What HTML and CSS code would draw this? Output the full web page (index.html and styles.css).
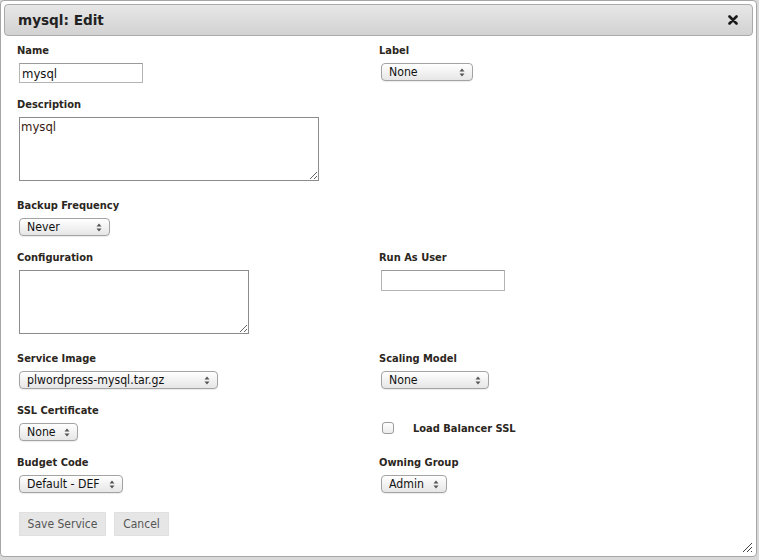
FILE: index.html
```html
<!DOCTYPE html>
<html>
<head>
<meta charset="utf-8">
<link rel="stylesheet" href="styles.css">
</head>
<body>
<div class="dialog">
  <div class="titlebar">
    <span class="title">mysql: Edit</span>
    <span class="close"><svg width="10" height="10" viewBox="0 0 10 10"><path d="M1.5 1.5 L8.5 8.5 M8.5 1.5 L1.5 8.5" stroke="#1a1a1a" stroke-width="2.6" stroke-linecap="round"/></svg></span>
  </div>
  <div class="content">
    <div class="row">
      <div class="field">
        <label class="lbl">Name</label>
        <input class="text" type="text" value="mysql">
      </div>
      <div class="field">
        <label class="lbl">Label</label>
        <span class="sel w-92"><select><option>None</option></select><svg class="arr" width="6" height="9" viewBox="0 0 6 9"><path d="M3 0.5 L5.5 3.5 L0.5 3.5 Z M3 8.5 L5.5 5.5 L0.5 5.5 Z" fill="#555"/></svg></span>
      </div>
    </div>
    <div class="row tall">
      <div class="field">
        <label class="lbl">Description</label>
        <textarea class="area w-300">mysql</textarea>
      </div>
      <div class="field"></div>
    </div>
    <div class="row">
      <div class="field">
        <label class="lbl">Backup Frequency</label>
        <span class="sel w-91"><select><option>Never</option></select><svg class="arr" width="6" height="9" viewBox="0 0 6 9"><path d="M3 0.5 L5.5 3.5 L0.5 3.5 Z M3 8.5 L5.5 5.5 L0.5 5.5 Z" fill="#555"/></svg></span>
      </div>
      <div class="field"></div>
    </div>
    <div class="row tall">
      <div class="field">
        <label class="lbl">Configuration</label>
        <textarea class="area w-230"></textarea>
      </div>
      <div class="field">
        <label class="lbl">Run As User</label>
        <input class="text tall-input" type="text" value="">
      </div>
    </div>
    <div class="row">
      <div class="field">
        <label class="lbl">Service Image</label>
        <span class="sel w-199"><select><option>plwordpress-mysql.tar.gz</option></select><svg class="arr" width="6" height="9" viewBox="0 0 6 9"><path d="M3 0.5 L5.5 3.5 L0.5 3.5 Z M3 8.5 L5.5 5.5 L0.5 5.5 Z" fill="#555"/></svg></span>
      </div>
      <div class="field">
        <label class="lbl">Scaling Model</label>
        <span class="sel w-108"><select><option>None</option></select><svg class="arr" width="6" height="9" viewBox="0 0 6 9"><path d="M3 0.5 L5.5 3.5 L0.5 3.5 Z M3 8.5 L5.5 5.5 L0.5 5.5 Z" fill="#555"/></svg></span>
      </div>
    </div>
    <div class="row">
      <div class="field">
        <label class="lbl">SSL Certificate</label>
        <span class="sel w-59"><select><option>None</option></select><svg class="arr" width="6" height="9" viewBox="0 0 6 9"><path d="M3 0.5 L5.5 3.5 L0.5 3.5 Z M3 8.5 L5.5 5.5 L0.5 5.5 Z" fill="#555"/></svg></span>
      </div>
      <div class="field check-field">
        <span class="checkbox"></span>
        <span class="check-label">Load Balancer SSL</span>
      </div>
    </div>
    <div class="row last">
      <div class="field">
        <label class="lbl">Budget Code</label>
        <span class="sel w-104"><select><option>Default - DEF</option></select><svg class="arr" width="6" height="9" viewBox="0 0 6 9"><path d="M3 0.5 L5.5 3.5 L0.5 3.5 Z M3 8.5 L5.5 5.5 L0.5 5.5 Z" fill="#555"/></svg></span>
      </div>
      <div class="field">
        <label class="lbl">Owning Group</label>
        <span class="sel w-66"><select><option>Admin</option></select><svg class="arr" width="6" height="9" viewBox="0 0 6 9"><path d="M3 0.5 L5.5 3.5 L0.5 3.5 Z M3 8.5 L5.5 5.5 L0.5 5.5 Z" fill="#555"/></svg></span>
      </div>
    </div>
    <div class="buttons">
      <button class="btn w-87">Save Service</button>
      <button class="btn w-55">Cancel</button>
    </div>
  </div>
  <svg class="resize" width="12" height="12" viewBox="0 0 12 12"><path d="M11 2 L2 11 M11 6 L6 11 M11 10 L10 11" stroke="#444" stroke-width="1"/></svg>
</div>
</body>
</html>
```

FILE: styles.css
```css
html, body {
  margin: 0;
  padding: 0;
}
body {
  background: #d9d9d9;
  width: 759px;
  height: 560px;
  overflow: hidden;
  font-family: "DejaVu Sans Condensed", "DejaVu Sans", sans-serif;
  color: #2b2620;
}
.dialog {
  position: relative;
  box-sizing: border-box;
  width: 757px;
  height: 557px;
  background: #fff;
  border: 1px solid #a6a6a6;
  border-radius: 4px;
  padding: 3px;
}
.titlebar {
  box-sizing: border-box;
  height: 32px;
  border: 1px solid #aaaaaa;
  border-radius: 4px;
  background: linear-gradient(#e7e7e7, #d2d2d2);
  display: flex;
  align-items: center;
  justify-content: space-between;
  padding: 0 14px 0 13px;
}
.title {
  font-family: "DejaVu Sans", sans-serif;
  font-weight: bold;
  font-size: 13.6px;
  color: #222;
}
.close {
  display: flex;
  align-items: center;
}
.content {
  padding: 6px 0 0 13px;
}
.row {
  display: grid;
  grid-template-columns: 362px 1fr;
  margin-bottom: 13px;
}
.row.tall {
  margin-bottom: 16px;
}
.row.last {
  margin-bottom: 19px;
}
.field {
  display: flex;
  flex-direction: column;
  align-items: flex-start;
}
.lbl {
  font-weight: bold;
  font-size: 11px;
  line-height: 17px;
  margin-bottom: 4px;
  color: #2b2620;
}
.text {
  box-sizing: border-box;
  display: block;
  margin: 0 0 0 2px;
  width: 124px;
  height: 20px;
  border: 1px solid #b4b4b4;
  border-top-color: #9a9a9a;
  padding: 0 2px;
  font-family: "DejaVu Sans Condensed", "DejaVu Sans", sans-serif;
  font-size: 13px;
  color: #111;
  outline: none;
}
.tall-input {
  height: 21px;
}
.area {
  box-sizing: border-box;
  display: block;
  margin: 0 0 0 2px;
  height: 64px;
  border: 1px solid #8c8c8c;
  padding: 1px 1px;
  font-family: "DejaVu Sans Condensed", "DejaVu Sans", sans-serif;
  font-size: 13px;
  line-height: 16px;
  color: #3a1a10;
  resize: both;
  outline: none;
}
.w-300 { width: 300px; }
.w-230 { width: 230px; }
.sel {
  position: relative;
  display: block;
  margin-left: 2px;
  height: 18px;
}
.sel select {
  -webkit-appearance: none;
  appearance: none;
  box-sizing: border-box;
  display: block;
  width: 100%;
  height: 18px;
  margin: 0;
  border: 1px solid #a3a3a3;
  border-radius: 4px;
  background: linear-gradient(#ffffff, #f0f0f0 60%, #e6e6e6);
  box-shadow: 0 1px 1px rgba(0,0,0,0.08);
  padding: 0 0 0 7px;
  font-family: "DejaVu Sans Condensed", "DejaVu Sans", sans-serif;
  font-size: 12.2px;
  line-height: 16px;
  color: #111;
  outline: none;
}
.sel .arr {
  position: absolute;
  right: 8px;
  top: 5px;
  pointer-events: none;
}
.w-92 { width: 92px; }
.w-91 { width: 91px; }
.w-199 { width: 199px; }
.w-108 { width: 108px; }
.w-59 { width: 59px; }
.w-104 { width: 104px; }
.w-66 { width: 66px; }
.check-field {
  flex-direction: row;
  align-items: center;
  padding-top: 13px;
}
.checkbox {
  box-sizing: border-box;
  width: 12px;
  height: 12px;
  margin-left: 3px;
  border: 1px solid #9c9c9c;
  border-radius: 3px;
  background: linear-gradient(#ffffff, #ececec);
}
.check-label {
  margin-left: 19px;
  font-weight: bold;
  font-size: 11px;
  line-height: 17px;
  color: #2b2620;
}
.buttons {
  display: flex;
  gap: 8px;
  margin-left: 2px;
}
.btn {
  box-sizing: border-box;
  height: 24px;
  padding: 0;
  border: 1px solid #e0e0e0;
  border-radius: 0;
  background: #e6e6e6;
  font-family: "DejaVu Sans Condensed", "DejaVu Sans", sans-serif;
  font-size: 12px;
  color: #555;
}
.w-87 { width: 87px; }
.w-55 { width: 55px; }
.resize {
  position: absolute;
  right: 3px;
  bottom: 3px;
}
```
